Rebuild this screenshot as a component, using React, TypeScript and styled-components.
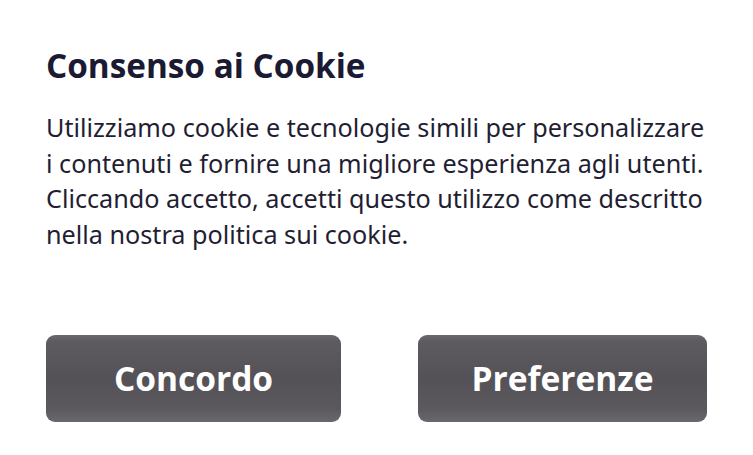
import React from "react";
import styled, { createGlobalStyle } from "styled-components";

const GlobalStyle = createGlobalStyle`
  html, body {
    margin: 0;
    padding: 0;
    background: #ffffff;
  }
  body {
    font-family: "Open Sans", "Noto Sans", sans-serif;
  }
`;

const Banner = styled.div`
  width: 753px;
  height: 455px;
  box-sizing: border-box;
  padding: 45px 46px 0 46px;
  display: flex;
  flex-direction: column;
`;

const Title = styled.h1`
  margin: 0;
  font-family: "Open Sans", sans-serif;
  font-size: 33.3px;
  font-weight: 700;
  line-height: 40px;
  color: #1b1a33;
`;

const Body = styled.p`
  margin: 25px 0 0;
  font-family: "Noto Sans", sans-serif;
  font-size: 25.2px;
  line-height: 35.7px;
  color: #1f1e33;
  width: 668px;
`;

const Actions = styled.div`
  margin-top: 82px;
  display: flex;
  justify-content: space-between;
  width: 661px;
`;

const ActionButton = styled.button<{ $width: number }>`
  width: ${({ $width }) => $width}px;
  height: 87px;
  padding: 0;
  border: none;
  border-radius: 9px;
  background: linear-gradient(
    to bottom,
    #6b686e 0px,
    #5d5a60 6px,
    #545157 50%,
    #5b585e 85%,
    #6a676d 100%
  );
  color: #ffffff;
  font-family: "Open Sans", sans-serif;
  font-size: 33.5px;
  font-weight: 700;
  cursor: pointer;
`;

export default function App() {
  return (
    <>
      <GlobalStyle />
      <Banner>
        <Title>Consenso ai Cookie</Title>
        <Body>
          Utilizziamo cookie e tecnologie simili per personalizzare i contenuti e
          fornire una migliore esperienza agli utenti. Cliccando accetto, accetti
          questo utilizzo come descritto nella nostra politica sui cookie.
        </Body>
        <Actions>
          <ActionButton $width={295}>Concordo</ActionButton>
          <ActionButton $width={289}>Preferenze</ActionButton>
        </Actions>
      </Banner>
    </>
  );
}
